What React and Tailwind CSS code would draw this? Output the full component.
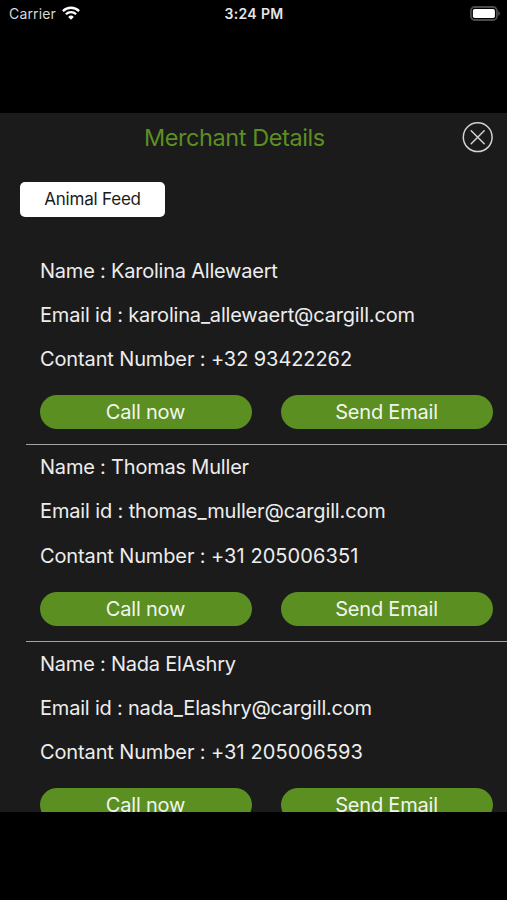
import React from "react";

const merchants = [
  {
    name: "Name : Karolina Allewaert",
    nameClass: "tracking-[-0.22px]",
    email: "Email id : karolina_allewaert@cargill.com",
    emailClass: "tracking-[-0.18px]",
    phone: "+32 93422262",
    phoneClass: "tracking-[-0.08px]",
  },
  {
    name: "Name : Thomas Muller",
    nameClass: "tracking-[-0.2px]",
    email: "Email id : thomas_muller@cargill.com",
    emailClass: "tracking-[-0.14px]",
    phone: "+31 205006351",
    phoneClass: "tracking-[0.08px]",
  },
  {
    name: "Name : Nada ElAshry",
    nameClass: "tracking-[-0.22px]",
    email: "Email id : nada_Elashry@cargill.com",
    emailClass: "tracking-[-0.2px]",
    phone: "+31 205006593",
    phoneClass: "tracking-[0.1px]",
  },
];

function StatusBar() {
  return (
    <header className="grid h-[28px] shrink-0 grid-cols-3 items-center pr-[7px] pl-[9px] text-[14px] leading-none text-white">
      <div className="flex items-center gap-[6px]">
        <span className="tracking-[0.15px] text-[#d8d8d8]">Carrier</span>
        <svg className="mb-[2px]" width="18" height="14" viewBox="0 0 18 14" fill="none" stroke="#fff" strokeWidth="2.3">
          <path d="M0.9 5.1a11.5 11.5 0 0 1 16.2 0" />
          <path d="M3.9 8.2a7.2 7.2 0 0 1 10.2 0" />
          <path d="M9 13.8 6.2 10.9a4 4 0 0 1 5.6 0Z" fill="#fff" stroke="none" />
        </svg>
      </div>
      <div className="pr-[1px] text-center font-semibold tracking-[0.35px] text-[#e6e6e6]">3:24 PM</div>
      <svg className="mb-[2px] justify-self-end" width="31" height="15" viewBox="0 0 31 15">
        <rect x="1.9" y="1" width="26" height="13" rx="3.8" fill="#000" stroke="#4c4c4e" strokeWidth="1.8" />
        <rect x="3.9" y="3" width="22" height="9" rx="1.8" fill="#fff" />
        <path d="M29.2 5.2v4.6c1-.4 1.8-1.2 1.8-2.3s-.8-1.9-1.8-2.3Z" fill="#4c4c4e" />
      </svg>
    </header>
  );
}

function PillButton({ children }) {
  return (
    <button className="flex h-[34px] w-[212px] items-center justify-center rounded-full bg-[#5b8f22] text-[20px] leading-none tracking-[-0.2px] text-[#f2f5ee]">
      {children}
    </button>
  );
}

function Merchant({ merchant }) {
  return (
    <li className="h-[196.67px] shrink-0">
      <div className="flex h-full flex-col pl-[40px] text-[20px] leading-[44.2px] whitespace-nowrap text-[#ededed]">
        <p><span className={merchant.nameClass}>{merchant.name}</span></p>
        <p><span className={merchant.emailClass}>{merchant.email}</span></p>
        <p>
          <span className="tracking-[-0.13px]">Contant Number : </span>
          <span className={merchant.phoneClass}>{merchant.phone}</span>
        </p>
        <div className="mt-[13.7px] -ml-[0.5px] flex gap-[29px]">
          <PillButton>Call now</PillButton>
          <PillButton>Send Email</PillButton>
        </div>
        <div className="mt-auto -ml-[14.5px] h-px shrink-0 bg-[#a4a4a4]" />
      </div>
    </li>
  );
}

export default function App() {
  return (
    <div className="flex h-[900px] w-[507px] flex-col overflow-hidden bg-black font-['Inter','Liberation_Sans',sans-serif]">
      <StatusBar />
      <main className="mt-[85px] flex h-[699px] shrink-0 flex-col overflow-hidden bg-[#1b1b1b]">
        <div className="flex h-[48px] shrink-0 items-center pr-[14px] pl-[144px]">
          <h1 className="pt-[2px] text-[23.5px] leading-none tracking-[-0.43px] whitespace-nowrap text-[#5b8f22]">Merchant Details</h1>
          <button className="ml-auto" aria-label="Close">
            <svg className="block" width="31" height="31" viewBox="0 0 31 31" fill="none" stroke="#d2d2d2" strokeWidth="1.5">
              <circle cx="15.7" cy="15.2" r="14.4" />
              <path d="m9.2 8.7 13 13M22.2 8.7l-13 13" strokeLinecap="round" />
            </svg>
          </button>
        </div>
        <div className="mt-[20.5px] ml-[20px] flex h-[35.5px] w-[145px] shrink-0 items-center justify-center rounded-[5px] bg-white text-[17px] leading-none tracking-[-0.2px] text-[#1b1b1b]">
          Animal Feed
        </div>
        <ul className="mt-[31.6px] flex flex-col">
          {merchants.map((m) => (
            <Merchant key={m.name} merchant={m} />
          ))}
        </ul>
      </main>
    </div>
  );
}
